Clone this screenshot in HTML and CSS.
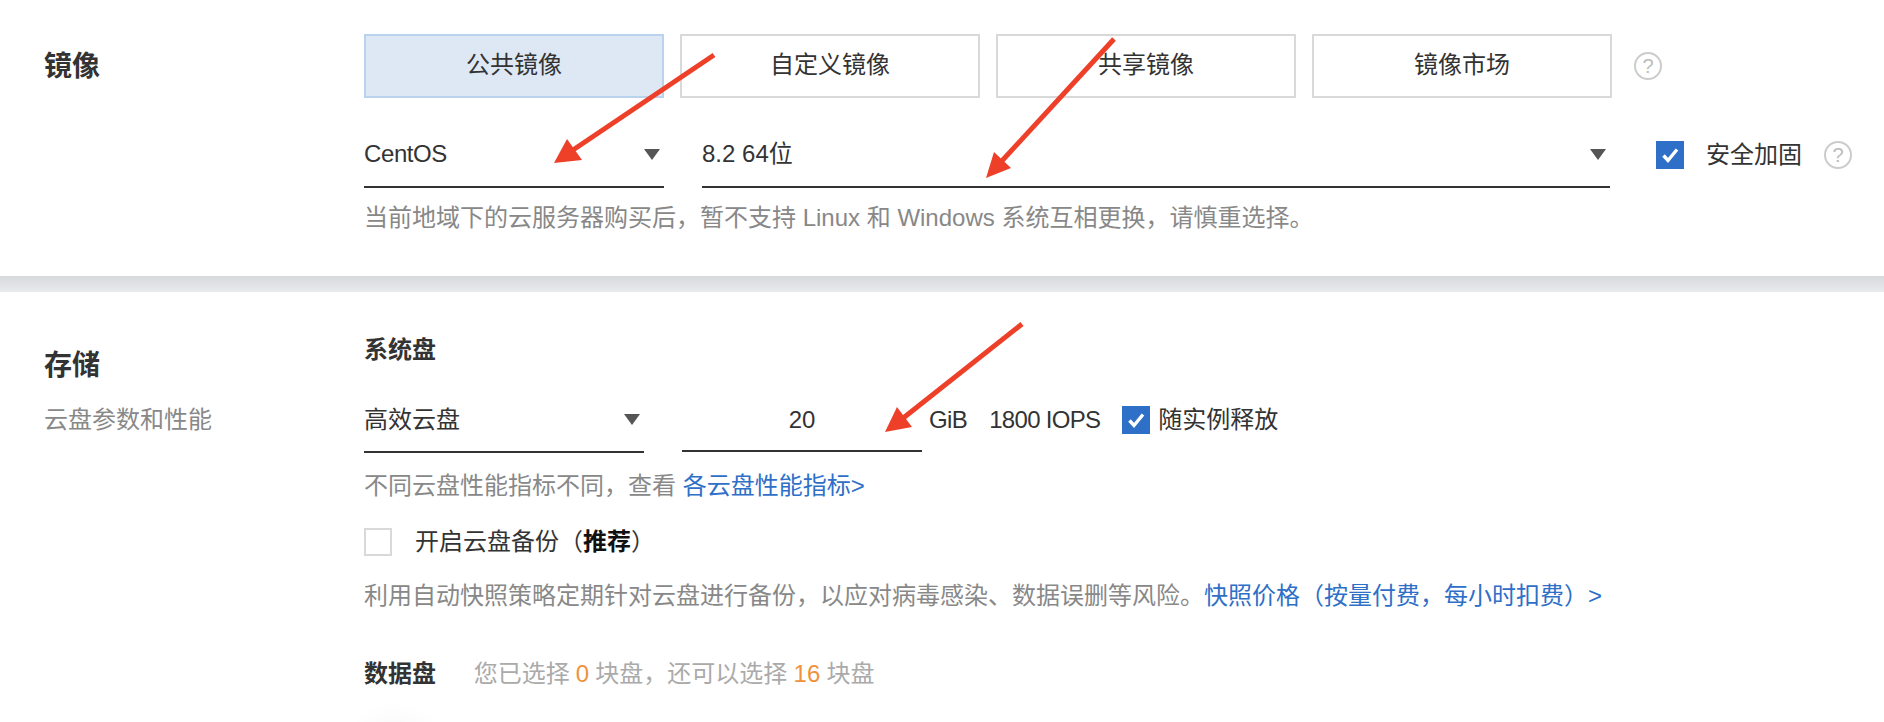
FILE: index.html
```html
<!DOCTYPE html>
<html lang="zh-CN">
<head>
    <meta charset="UTF-8">
    <meta name="viewport" content="width=device-width, initial-scale=1.0">
    <title>镜像与存储</title>
    <link rel="stylesheet" href="styles.css">
</head>
<body>
    <div class="page">
        <!-- 镜像 -->
        <section class="section section-image">
            <div class="section-label">
                <div class="label-title">镜像</div>
            </div>
            <div class="section-body">
                <div class="tab-row">
                    <button class="tab tab-active">公共镜像</button>
                    <button class="tab">自定义镜像</button>
                    <button class="tab">共享镜像</button>
                    <button class="tab">镜像市场</button>
                    <span class="help help-tabs">?</span>
                </div>
                <div class="select-row">
                    <div class="select select-os">
                        <span>CentOS</span>
                        <span class="caret"></span>
                    </div>
                    <div class="select select-version">
                        <span>8.2 64位</span>
                        <span class="caret"></span>
                    </div>
                    <label class="check check-harden">
                        <span class="check-box check-on">
                            <svg viewBox="0 0 28 28" width="28" height="28"><path d="M7.5 14.5l4.5 5 9-11" fill="none" stroke="#fff" stroke-width="3.4"/></svg>
                        </span>
                        <span class="check-text">安全加固</span>
                    </label>
                    <span class="help help-harden">?</span>
                </div>
                <p class="hint hint-image">当前地域下的云服务器购买后，暂不支持 Linux 和 Windows 系统互相更换，请慎重选择。</p>
            </div>
        </section>

        <div class="section-gap"></div>

        <!-- 存储 -->
        <section class="section section-storage">
            <div class="section-label">
                <div class="label-title label-storage">存储</div>
                <div class="label-desc">云盘参数和性能</div>
            </div>
            <div class="section-body">
                <div class="sub-title">系统盘</div>
                <div class="disk-row">
                    <div class="select select-disk">
                        <span>高效云盘</span>
                        <span class="caret"></span>
                    </div>
                    <div class="size-input">20</div>
                    <span class="unit">GiB</span>
                    <span class="iops">1800 IOPS</span>
                    <label class="check">
                        <span class="check-box check-on">
                            <svg viewBox="0 0 28 28" width="28" height="28"><path d="M7.5 14.5l4.5 5 9-11" fill="none" stroke="#fff" stroke-width="3.4"/></svg>
                        </span>
                        <span class="check-text check-release">随实例释放</span>
                    </label>
                </div>
                <p class="hint hint-disk">不同云盘性能指标不同，查看 <a class="link">各云盘性能指标&gt;</a></p>
                <label class="check backup-row">
                    <span class="check-box"></span>
                    <span class="check-text backup-text">开启云盘备份（<b>推荐</b>）</span>
                </label>
                <p class="hint hint-backup">利用自动快照策略定期针对云盘进行备份，以应对病毒感染、数据误删等风险。<a class="link">快照价格（按量付费，每小时扣费）&gt;</a></p>
                <div class="data-row">
                    <span class="sub-title">数据盘</span>
                    <span class="data-info">您已选择 <em>0</em> 块盘，还可以选择 <em>16</em> 块盘</span>
                </div>
                <div class="data-fade"></div>
            </div>
        </section>

        <!-- 标注箭头 -->
        <svg class="arrows" viewBox="0 0 1884 722" width="1884" height="722">
            <g fill="#ee4028" stroke="#ee4028">
                <line x1="714" y1="55" x2="570" y2="152" stroke-width="5"/>
                <polygon points="554,163 567,139 582,160" stroke="none"/>
                <line x1="1114" y1="39" x2="1000" y2="163" stroke-width="5"/>
                <polygon points="986,178 994,152 1011,168" stroke="none"/>
                <line x1="1022" y1="324" x2="902" y2="419" stroke-width="5"/>
                <polygon points="885,432 897,407 912,427" stroke="none"/>
            </g>
        </svg>
    </div>
</body>
</html>
```

FILE: styles.css
```css
* {
    margin: 0;
    padding: 0;
    box-sizing: border-box;
    font-family: 'Liberation Sans', 'Noto Sans CJK SC', sans-serif;
}

body {
    background: white;
    overflow: hidden;
}

.page {
    position: relative;
    width: 1884px;
    height: 722px;
    overflow: hidden;
    color: #333;
    font-size: 24px;
    line-height: 36px;
}

.section {
    display: flex;
}

.section-image {
    height: 276px;
    padding-top: 34px;
}

.section-storage {
    padding-top: 40px;
}

.section-gap {
    height: 16px;
    background: linear-gradient(#d8d9dc, #e9eaed);
}

.section-label {
    width: 364px;
    padding-left: 44px;
    flex-shrink: 0;
}

.label-title {
    font-size: 28px;
    font-weight: bold;
    line-height: 66px;
}

.label-storage {
    line-height: 68px;
}

.label-desc {
    margin-top: 2px;
    color: #888;
}

.section-body {
    flex: 1;
}

/* 镜像类型 */
.tab-row {
    display: flex;
    align-items: center;
    gap: 16px;
}

.tab {
    width: 300px;
    height: 64px;
    border: 2px solid #d9d9d9;
    background: white;
    color: #333;
    font-size: 24px;
    line-height: 36px;
    padding-bottom: 2px;
}

.tab-active {
    background: #dee8f5;
    border-color: #b9d3ee;
}

.help {
    width: 28px;
    height: 28px;
    border: 2px solid #ccc;
    border-radius: 50%;
    color: #bbb;
    font-size: 20px;
    line-height: 24px;
    text-align: center;
}

.help-tabs {
    margin-left: 6px;
}

.help-harden {
    margin-left: 22px;
}

/* 下拉 */
.select-row {
    display: flex;
    align-items: center;
    margin-top: 24px;
}

.select {
    display: flex;
    align-items: center;
    justify-content: space-between;
    border-bottom: 2px solid #333;
    padding-right: 4px;
}

.select-os {
    width: 300px;
    height: 66px;
    letter-spacing: -0.4px;
}

.select-version {
    width: 908px;
    height: 66px;
    margin-left: 38px;
}

.select-disk {
    width: 280px;
    height: 65px;
}

.caret {
    width: 0;
    height: 0;
    border-left: 8px solid transparent;
    border-right: 8px solid transparent;
    border-top: 11px solid #555;
}

.check {
    display: flex;
    align-items: center;
}

.check-harden {
    margin-left: 46px;
}

.check-box {
    display: block;
    width: 28px;
    height: 28px;
    border: 2px solid #d9d9d9;
    flex-shrink: 0;
}

.check-on {
    background: #2e6fc8;
    border: none;
}

.check-box svg {
    display: block;
}

.check-text {
    margin-left: 22px;
}

.check-release {
    margin-left: 8px;
}

.backup-text {
    margin-left: 23px;
}

.backup-text b {
    color: #111;
}

.hint {
    color: #888;
}

.hint-image {
    margin-top: 12px;
}

.hint-disk {
    margin-top: 15px;
}

.hint-backup {
    margin-top: 18px;
}

.link {
    color: #2e6fc8;
}

/* 系统盘 */
.sub-title {
    font-weight: bold;
}

.disk-row {
    display: flex;
    align-items: flex-start;
    margin-top: 20px;
}

.size-input {
    width: 240px;
    height: 64px;
    margin-left: 38px;
    border-bottom: 2px solid #333;
    line-height: 64px;
    text-align: center;
}

.unit,
.iops {
    line-height: 64px;
}

.unit {
    margin-left: 7px;
    letter-spacing: -0.6px;
}

.iops {
    margin-left: 22px;
    letter-spacing: -0.7px;
}

.disk-row .check {
    height: 64px;
    margin-left: 22px;
}

.backup-row {
    margin-top: 20px;
}

.data-row {
    margin-top: 42px;
}

.data-info {
    margin-left: 31px;
    color: #aaa;
    word-spacing: -0.5px;
}

.data-info em {
    font-style: normal;
    color: #f0923b;
}

.data-fade {
    width: 90px;
    height: 50px;
    margin: 10px 0 0 -14px;
    background: radial-gradient(ellipse at 50% 60%, #f9f9f9, white 70%);
}

.arrows {
    position: absolute;
    left: 0;
    top: 0;
    pointer-events: none;
}
```
